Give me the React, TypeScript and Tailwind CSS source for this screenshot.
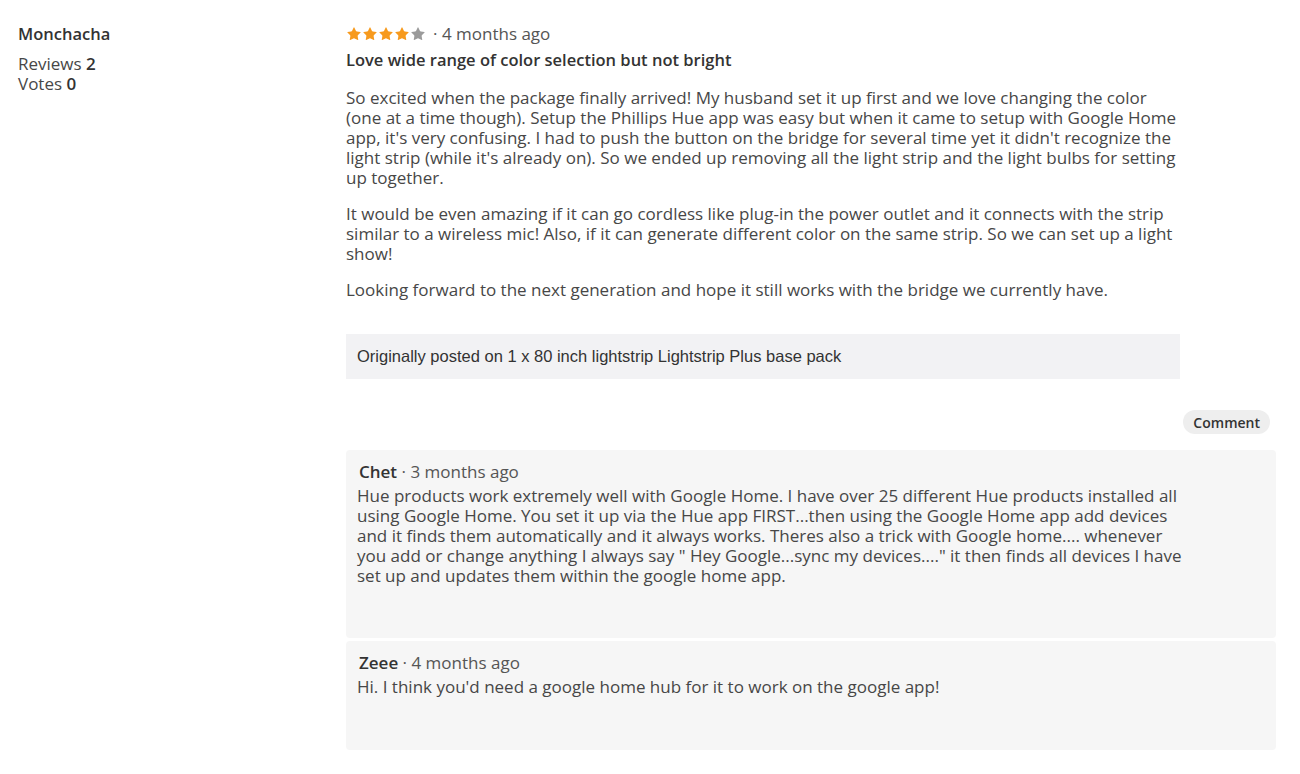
import { Star } from "lucide-react";

const comments = [
  {
    name: "Chet",
    date: "3 months ago",
    text: "Hue products work extremely well with Google Home. I have over 25 different Hue products installed all using Google Home. You set it up via the Hue app FIRST...then using the Google Home app add devices and it finds them automatically and it always works. Theres also a trick with Google home.... whenever you add or change anything I always say \" Hey Google...sync my devices....\" it then finds all devices I have set up and updates them within the google home app.",
    h: "h-[188px]",
  },
  {
    name: "Zeee",
    date: "4 months ago",
    text: "Hi. I think you'd need a google home hub for it to work on the google app!",
    h: "h-[109px]",
  },
];

function Stars({ rating }: { rating: number }) {
  return (
    <span className="flex items-center">
      {[0, 1, 2, 3, 4].map((i) => (
        <Star
          key={i}
          size={16}
          strokeWidth={0}
          className={i < rating ? "fill-[#f79a1d]" : "fill-[#9b9b9b]"}
        />
      ))}
    </span>
  );
}

export default function App() {
  return (
    <div className="min-h-[774px] bg-white font-['Open_Sans',sans-serif] text-[17px] text-[#474747]">
      <div className="flex pt-[24px]">
        <aside className="w-[346px] shrink-0 pl-[18px]">
          <div className="text-[16.5px] font-semibold leading-5 text-[#333]">Monchacha</div>
          <p className="mt-[10px] leading-5">
            Reviews <span className="font-semibold text-[#333]">2</span>
            <br />
            Votes <span className="font-semibold text-[#333]">0</span>
          </p>
        </aside>

        <main className="w-[930px]">
          <div className="flex items-center gap-[7px] leading-5 text-[#555]">
            <Stars rating={4} />
            <span>· 4 months ago</span>
          </div>
          <h3 className="mt-[6px] text-[16.5px] font-semibold leading-5 text-[#333]">
            Love wide range of color selection but not bright
          </h3>
          <div className="mt-[18px] w-[834px] space-y-4 leading-5">
            <p>
              So excited when the package finally arrived! My husband set it up first and we love changing the color (one at a time though). Setup the Phillips Hue app was easy but when it came to setup with Google Home app, it's very confusing. I had to push the button on the bridge for several time yet it didn't recognize the light strip (while it's already on). So we ended up removing all the light strip and the light bulbs for setting up together.
            </p>
            <p>
              It would be even amazing if it can go cordless like plug-in the power outlet and it connects with the strip similar to a wireless mic! Also, if it can generate different color on the same strip. So we can set up a light show!
            </p>
            <p>
              Looking forward to the next generation and hope it still works with the bridge we currently have.
            </p>
          </div>

          <div className="mt-[34px] flex h-[45px] w-[834px] items-center bg-[#f2f2f4] px-[11px] font-['Liberation_Sans',sans-serif] text-[16.5px] text-[#333]">
            Originally posted on 1 x 80 inch lightstrip Lightstrip Plus base pack
          </div>

          <div className="mt-[31px] flex justify-end pr-[6px]">
            <button className="h-[24px] rounded-full bg-[#eeeeee] px-[10px] text-[14px] font-semibold text-[#333]">
              Comment
            </button>
          </div>

          <div className="mt-[16px] flex flex-col gap-[3px]">
            {comments.map((c) => (
              <div key={c.name} className={`${c.h} rounded-[4px] bg-[#f6f6f6] px-[11px] pt-[12px]`}>
                <div className="leading-5">
                  <span className="ml-[2px] font-semibold text-[#333]">{c.name}</span>
                  <span className="text-[#555]"> · {c.date}</span>
                </div>
                <p className="mt-[4px] w-[828px] leading-5">{c.text}</p>
              </div>
            ))}
          </div>
        </main>
      </div>
    </div>
  );
}
